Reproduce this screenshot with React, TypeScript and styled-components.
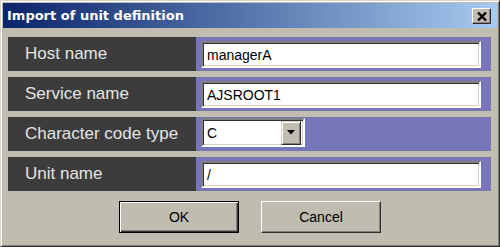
import styled, { createGlobalStyle } from "styled-components";

const GlobalStyle = createGlobalStyle`
  html, body {
    margin: 0;
    padding: 0;
    background: #c0bcb0;
  }
`;

const Window = styled.div`
  box-sizing: border-box;
  width: 500px;
  height: 247px;
  padding: 2px;
  background: #c0bcb0;
  border: 1px solid;
  border-color: #d8d4c8 #303030 #303030 #d8d4c8;
  box-shadow: inset 1px 1px #ffffff, inset -1px -1px #808080;
  font-family: "Liberation Sans", Arial, sans-serif;
  display: flex;
  flex-direction: column;
`;

const TitleBar = styled.div`
  height: 25px;
  display: flex;
  align-items: center;
  justify-content: space-between;
  padding: 0 6px 0 4px;
  background: linear-gradient(to right, #0a246a, #a6caf0);
`;

const TitleText = styled.span`
  font-family: "DejaVu Sans", Verdana, sans-serif;
  font-weight: bold;
  font-size: 13px;
  color: #ffffff;
`;

const CloseButton = styled.div`
  box-sizing: border-box;
  width: 19px;
  height: 16px;
  margin-top: 1px;
  background: #c0bcb0;
  border: 1px solid;
  border-color: #ffffff #303030 #303030 #ffffff;
  box-shadow: inset -1px -1px #808080;
  display: flex;
  align-items: center;
  justify-content: center;
`;

const Content = styled.div`
  padding: 9px 6px 0 5px;
  display: flex;
  flex-direction: column;
`;

const Rows = styled.div`
  display: flex;
  flex-direction: column;
  gap: 6px;
`;

const Row = styled.div`
  display: grid;
  grid-template-columns: 188px 1fr;
  height: 34px;
`;

const Label = styled.div`
  background: #3c3c3c;
  color: #e4e4e4;
  font-size: 17px;
  padding-left: 17px;
  display: flex;
  align-items: center;
`;

const Cell = styled.div<{ $top: number }>`
  background: #7676b8;
  padding: ${(p) => p.$top}px 10px 0 5px;
`;

const Field = styled.div`
  box-sizing: border-box;
  height: 27px;
  background: #ffffff;
  border: 2px solid;
  border-color: #808080 #ffffff #ffffff #808080;
  box-shadow: inset 1px 1px #303030, inset -1px -1px #d4d0c8;
  padding-left: 4px;
  font-size: 14px;
  color: #000000;
  display: flex;
  align-items: center;
`;

const Select = styled(Field)`
  width: 104px;
  height: 29px;
  padding-right: 2px;
  justify-content: space-between;
`;

const DropButton = styled.div`
  box-sizing: border-box;
  width: 20px;
  height: 24px;
  background: #c0bcb0;
  border: 1px solid;
  border-color: #d4d0c8 #303030 #303030 #d4d0c8;
  box-shadow: inset 1px 1px #ffffff, inset -1px -1px #808080;
  display: flex;
  align-items: center;
  justify-content: center;
`;

const Buttons = styled.div`
  display: flex;
  justify-content: center;
  gap: 22px;
  padding-top: 10px;
  margin-left: -5px;
  margin-right: -6px;
`;

const Button = styled.div<{ $default?: boolean }>`
  box-sizing: border-box;
  width: 120px;
  height: 32px;
  background: #c0bcb0;
  font-size: 14px;
  color: #000000;
  display: flex;
  align-items: center;
  justify-content: center;
  border: 1px solid;
  border-color: ${(p) =>
    p.$default ? "#000000" : "#ffffff #303030 #303030 #ffffff"};
  box-shadow: ${(p) =>
    p.$default
      ? "inset 1px 1px #ffffff, inset -1px -1px #303030, inset -2px -2px #808080"
      : "inset -1px -1px #808080"};
`;

const fields = [
  { label: "Host name", value: "managerA" },
  { label: "Service name", value: "AJSROOT1" },
];

export default function App() {
  return (
    <>
      <GlobalStyle />
      <Window>
        <TitleBar>
          <TitleText>Import of unit definition</TitleText>
          <CloseButton>
            <svg width="10" height="9" viewBox="0 0 10 9">
              <path d="M1 0.5 L9 8.5 M9 0.5 L1 8.5" stroke="#000" strokeWidth="2.4" />
            </svg>
          </CloseButton>
        </TitleBar>
        <Content>
          <Rows>
            {fields.map((f) => (
              <Row key={f.label}>
                <Label>{f.label}</Label>
                <Cell $top={4}>
                  <Field>{f.value}</Field>
                </Cell>
              </Row>
            ))}
            <Row>
              <Label>Character code type</Label>
              <Cell $top={1}>
                <Select>
                  C
                  <DropButton>
                    <svg width="8" height="5" viewBox="0 0 8 5">
                      <path d="M0 0 H8 L4 4.5 Z" fill="#000" />
                    </svg>
                  </DropButton>
                </Select>
              </Cell>
            </Row>
            <Row>
              <Label>Unit name</Label>
              <Cell $top={4}>
                <Field>/</Field>
              </Cell>
            </Row>
          </Rows>
          <Buttons>
            <Button $default>OK</Button>
            <Button>Cancel</Button>
          </Buttons>
        </Content>
      </Window>
    </>
  );
}
